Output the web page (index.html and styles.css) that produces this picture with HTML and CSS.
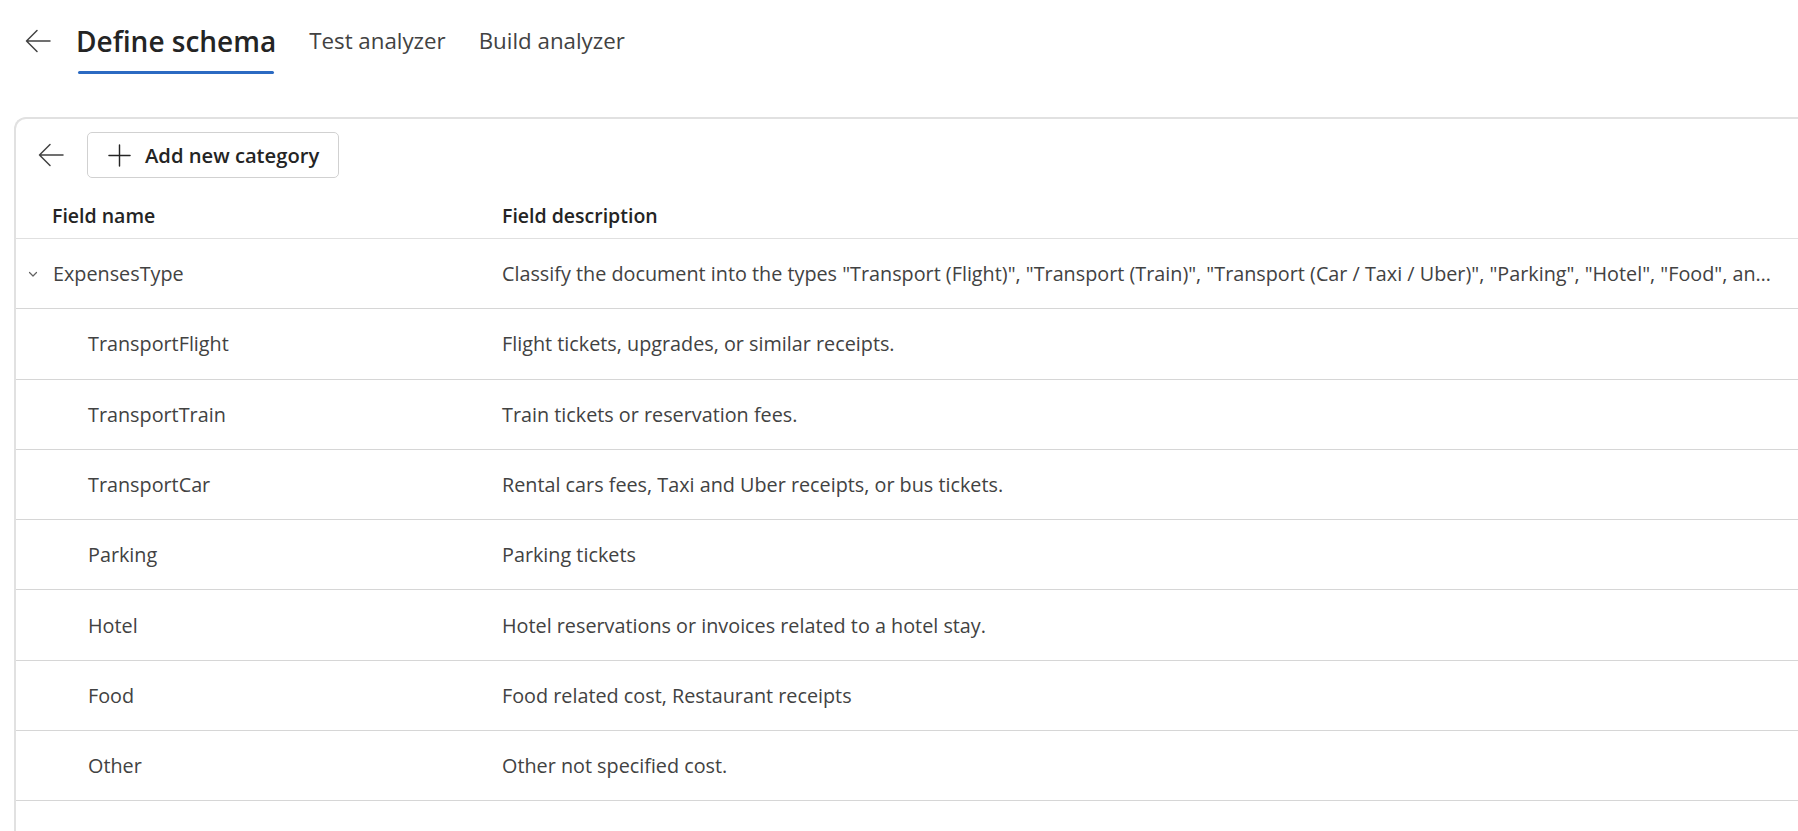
FILE: index.html
```html
<!DOCTYPE html>
<html lang="en">
<head>
<meta charset="utf-8">
<title>Define schema</title>
<link rel="stylesheet" href="styles.css">
</head>
<body>
<header class="topbar">
  <button class="back-btn" aria-label="Back">
    <svg width="26" height="24" viewBox="0 0 26 24"><path d="M1.5 12H25M1.5 12L12 1.5M1.5 12L12 22.5" fill="none" stroke="#424242" stroke-width="1.5" stroke-linecap="round" stroke-linejoin="round"/></svg>
  </button>
  <nav class="tablist">
    <div class="tab active">Define schema</div>
    <div class="tab">Test analyzer</div>
    <div class="tab">Build analyzer</div>
  </nav>
</header>
<main class="card">
  <div class="toolbar">
    <button class="icon-btn" aria-label="Back">
      <svg width="26" height="24" viewBox="0 0 26 24"><path d="M1.5 12H25M1.5 12L12 1.5M1.5 12L12 22.5" fill="none" stroke="#424242" stroke-width="1.5" stroke-linecap="round" stroke-linejoin="round"/></svg>
    </button>
    <button class="add-btn">
      <svg width="23" height="23" viewBox="0 0 24 24"><path d="M12 1V23M1 12H23" fill="none" stroke="#242424" stroke-width="1.5" stroke-linecap="round"/></svg>
      <span>Add new category</span>
    </button>
  </div>
  <div class="table">
    <div class="row head">
      <div class="c1 pad-head">Field name</div>
      <div class="c2">Field description</div>
    </div>
    <div class="row">
      <div class="c1 pad-parent">
        <svg class="chev" width="10" height="10" viewBox="0 0 10 10"><path d="M1.5 3.5L5 7L8.5 3.5" fill="none" stroke="#616161" stroke-width="1.2" stroke-linecap="round" stroke-linejoin="round"/></svg>
        <span>ExpensesType</span>
      </div>
      <div class="c2">Classify the document into the types "Transport (Flight)", "Transport (Train)", "Transport (Car / Taxi / Uber)", "Parking", "Hotel", "Food", and "Other" based on the content of the receipt or invoice.</div>
    </div>
    <div class="row">
      <div class="c1 pad-child">TransportFlight</div>
      <div class="c2">Flight tickets, upgrades, or similar receipts.</div>
    </div>
    <div class="row">
      <div class="c1 pad-child">TransportTrain</div>
      <div class="c2">Train tickets or reservation fees.</div>
    </div>
    <div class="row">
      <div class="c1 pad-child">TransportCar</div>
      <div class="c2">Rental cars fees, Taxi and Uber receipts, or bus tickets.</div>
    </div>
    <div class="row">
      <div class="c1 pad-child">Parking</div>
      <div class="c2">Parking tickets</div>
    </div>
    <div class="row">
      <div class="c1 pad-child">Hotel</div>
      <div class="c2">Hotel reservations or invoices related to a hotel stay.</div>
    </div>
    <div class="row">
      <div class="c1 pad-child">Food</div>
      <div class="c2">Food related cost, Restaurant receipts</div>
    </div>
    <div class="row">
      <div class="c1 pad-child">Other</div>
      <div class="c2">Other not specified cost.</div>
    </div>
  </div>
</main>
</body>
</html>
```
FILE: styles.css
```css
html, body {
  margin: 0;
  padding: 0;
  background: #ffffff;
  overflow: hidden;
  height: 100%;
}
body {
  font-family: "Open Sans", "Noto Sans", "Liberation Sans", sans-serif;
  color: #424242;
}
button {
  font-family: inherit;
  background: none;
  border: none;
  padding: 0;
  margin: 0;
  cursor: pointer;
}

.topbar {
  display: flex;
  align-items: flex-start;
  box-sizing: border-box;
  height: 117px;
  padding: 21px 0 0 25px;
}
.back-btn {
  display: flex;
  align-items: center;
  height: 40px;
  margin-right: 25px;
}
.tablist {
  display: flex;
  gap: 33px;
}
.tab {
  display: flex;
  flex-direction: column;
  line-height: 40px;
  font-size: 22.3px;
  color: #424242;
  white-space: nowrap;
}
.tab.active {
  font-size: 28px;
  font-weight: 600;
  color: #242424;
}
.tab.active::after {
  content: "";
  display: block;
  height: 3px;
  margin: 10px 2px 0 2px;
  border-radius: 2px;
  background: #2b6ac2;
}

.card {
  margin-left: 14px;
  margin-right: -80px;
  height: calc(100vh - 117px);
  border-top: 2px solid #e1e1e1;
  border-left: 2px solid #e1e1e1;
  border-top-left-radius: 12px;
  box-sizing: border-box;
  overflow: hidden;
}
.toolbar {
  display: flex;
  align-items: center;
  gap: 23px;
  padding: 13px 0 0 22px;
  height: 46px;
}
.icon-btn {
  display: flex;
  align-items: center;
}
.add-btn {
  display: flex;
  align-items: center;
  gap: 14px;
  box-sizing: border-box;
  height: 46px;
  padding: 0 19px 0 20px;
  border: 1px solid #d1d1d1;
  border-radius: 5px;
  font-size: 20.2px;
  font-weight: 600;
  color: #242424;
  white-space: nowrap;
}
.table {
  margin-top: 14px;
}
.row {
  display: flex;
  align-items: center;
  box-sizing: border-box;
  height: 70.3px;
  border-bottom: 1px solid #d6d6d6;
  font-size: 19.8px;
  color: #424242;
  white-space: nowrap;
}
.row.head {
  height: 47px;
  font-size: 19.5px;
  font-weight: 600;
  color: #242424;
  border-bottom-color: #e0e0e0;
}
.c1 {
  flex: none;
  width: 485px;
  box-sizing: border-box;
  display: flex;
  align-items: center;
}
.pad-head { padding-left: 36px; }
.pad-parent { padding-left: 12px; gap: 15px; }
.pad-child { padding-left: 72px; }
.chev { flex: none; }
.c2 {
  flex: none;
  width: 1278px;
  overflow: hidden;
  text-overflow: ellipsis;
  padding-left: 1px;
  box-sizing: border-box;
}
```
